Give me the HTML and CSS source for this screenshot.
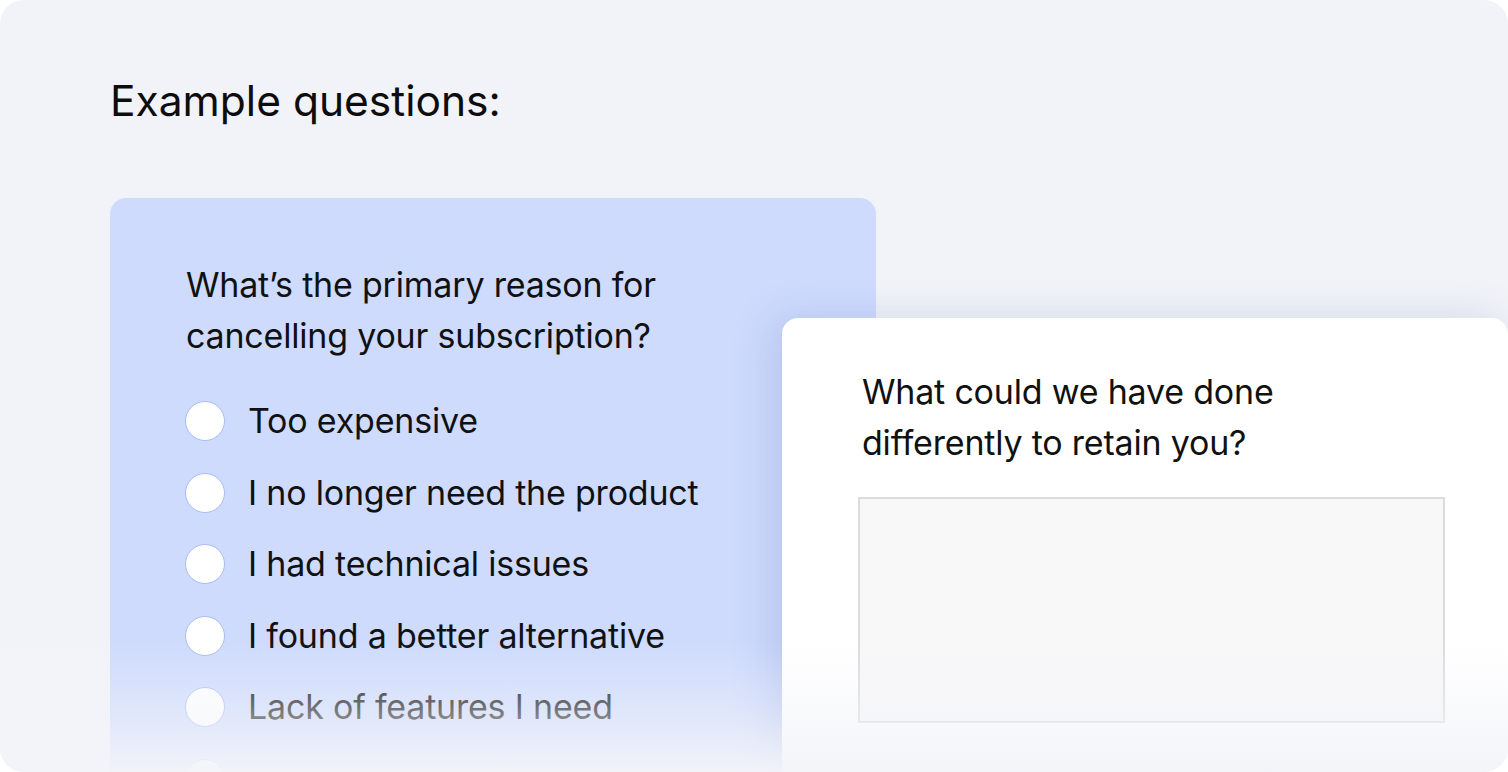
FILE: index.html
```html
<!DOCTYPE html>
<html lang="en">
<head>
<meta charset="utf-8">
<title>Example questions</title>
<link rel="stylesheet" href="styles.css">
</head>
<body>
<div class="frame">
  <h1 class="heading">Example questions:</h1>
  <div class="stage">
    <div class="card card-blue">
      <p class="question">What’s the primary reason for<br>cancelling your subscription?</p>
      <ul class="options">
        <li class="option"><span class="radio"></span><span>Too expensive</span></li>
        <li class="option"><span class="radio"></span><span>I no longer need the product</span></li>
        <li class="option"><span class="radio"></span><span>I had technical issues</span></li>
        <li class="option"><span class="radio"></span><span>I found a better alternative</span></li>
        <li class="option"><span class="radio"></span><span>Lack of features I need</span></li>
        <li class="option"><span class="radio"></span></li>
      </ul>
    </div>
    <div class="card card-white">
      <p class="question">What could we have done<br>differently to retain you?</p>
      <div class="textarea"></div>
    </div>
  </div>
  <div class="fade"></div>
</div>
</body>
</html>
```
FILE: styles.css
```css
* { box-sizing: border-box; }
html, body { margin: 0; padding: 0; background: #ffffff; }
body {
  font-family: "Inter", "Lato", "Liberation Sans", sans-serif;
  color: #111111;
}
.frame {
  position: relative;
  width: 1508px;
  height: 772px;
  background: #f1f3f8;
  border-radius: 24px;
  overflow: hidden;
  display: flex;
  flex-direction: column;
}
.heading {
  margin: 0;
  padding: 76px 0 0 110px;
  font-size: 42.5px;
  line-height: 50px;
  font-weight: 400;
  letter-spacing: 0;
  color: #0d0d0d;
}
.stage {
  margin-top: 72px;
  flex: 1;
  display: grid;
  grid-template-columns: 672px 94px 1fr;
  grid-template-rows: 120px 1fr;
  padding-left: 110px;
}
.card { border-radius: 16px; }
.card-blue {
  grid-column: 1 / 3;
  grid-row: 1 / 3;
  background: #cedbfd;
  padding: 61px 0 0 76px;
}
.card-white {
  grid-column: 2 / 4;
  grid-row: 2 / 3;
  background: #ffffff;
  box-shadow: -10px 0 40px rgba(70, 95, 170, 0.18);
  padding: 48px 0 0 80px;
  position: relative;
  z-index: 1;
}
.question {
  margin: 0;
  font-size: 34px;
  line-height: 51px;
  letter-spacing: -0.2px;
  color: #111111;
}
.options {
  list-style: none;
  margin: 40px 0 0 0;
  padding: 0;
  display: flex;
  flex-direction: column;
  gap: 31.5px;
}
.option {
  display: flex;
  align-items: center;
  gap: 23px;
  min-height: 40px;
  font-size: 34px;
  line-height: 40px;
  letter-spacing: -0.2px;
  margin-left: -1px;
}
.radio {
  width: 40px;
  height: 40px;
  border-radius: 50%;
  background: #ffffff;
  border: 1.5px solid #a7bcf4;
  flex: none;
}
.textarea {
  margin: 29px 0 0 -4px;
  width: 587px;
  height: 226px;
  background: #f8f8f9;
  border: 2px solid #dcdcdd;
}
.fade {
  position: absolute;
  left: 0;
  right: 0;
  bottom: 0;
  height: 130px;
  background: linear-gradient(to bottom, rgba(243, 244, 249, 0) 0%, rgba(243, 244, 249, 0.42) 50%, rgba(243, 244, 249, 0.96) 100%);
  z-index: 2;
  pointer-events: none;
}
```
